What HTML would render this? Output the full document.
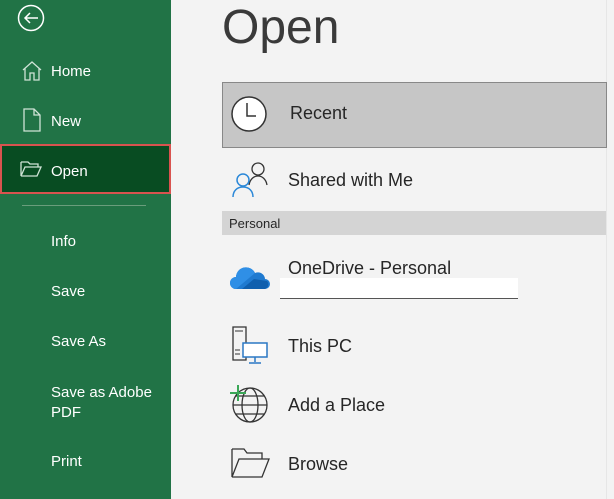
<!DOCTYPE html><html><head><style>
body{margin:0;width:614px;height:499px;overflow:hidden;background:#f3f3f3;font-family:"Liberation Sans",sans-serif;position:relative}
.side{position:absolute;left:0;top:0;width:171px;height:499px;background:#217346}
.si{position:absolute;left:51px;color:#fff;font-size:15px;margin-top:1px}
.ic{position:absolute}
.t{position:absolute;color:#262626;font-size:18px}
</style></head><body>
<div class="side">
<svg class="ic" style="left:16px;top:3px" width="30" height="30" viewBox="0 0 30 30"><circle cx="15" cy="15" r="12.5" fill="none" stroke="#fff" stroke-width="1.5"/><path d="M22 15H9M14 10l-5 5 5 5" fill="none" stroke="#fff" stroke-width="1.5"/></svg>
<svg class="ic" style="left:21px;top:60px" width="22" height="22" viewBox="0 0 22 22"><path d="M2 10L11 2l9 8M4 8v12h5v-7h4v7h5V8" fill="none" stroke="#cfe3d6" stroke-width="1.3"/></svg>
<div class="si" style="top:62px">Home</div>
<svg class="ic" style="left:22px;top:108px" width="20" height="24" viewBox="0 0 20 24"><path d="M2 1h10l6 6v16H2zM12 1v6h6" fill="none" stroke="#cfe3d6" stroke-width="1.3"/></svg>
<div class="si" style="top:112px">New</div>
<div style="position:absolute;left:0;top:144px;width:167px;height:46px;background:#084c22;border:2px solid #d9534f;box-sizing:content-box"></div>
<svg class="ic" style="left:20px;top:160px" width="22" height="18" viewBox="0 0 22 18"><path d="M1 2h7l2 2h8v3M1 2v14l4-9h16l-4 9H1" fill="none" stroke="#cfe3d6" stroke-width="1.3"/></svg>
<div class="si" style="top:162px">Open</div>
<div style="position:absolute;left:22px;top:205px;width:124px;height:1px;background:#6a9d7c"></div>
<div class="si" style="top:232px">Info</div>
<div class="si" style="top:282px">Save</div>
<div class="si" style="top:332px">Save As</div>
<div class="si" style="top:382px;line-height:20px">Save as Adobe<br>PDF</div>
<div class="si" style="top:452px">Print</div>
</div>
<div style="position:absolute;left:222px;top:0;font-size:48px;color:#3a3a3a;font-weight:300">Open</div>
<div style="position:absolute;left:606px;top:0;width:1px;height:499px;background:#e6e6e6"></div>
<div style="position:absolute;left:222px;top:82px;width:383px;height:64px;background:#c6c6c6;border:1px solid #888"></div>
<svg class="ic" style="left:229px;top:94px" width="40" height="40" viewBox="0 0 40 40"><circle cx="20" cy="20" r="17" fill="#fff" stroke="#333" stroke-width="1.5"/><path d="M18 9v13h9" fill="none" stroke="#333" stroke-width="1.5"/></svg>
<div class="t" style="left:290px;top:103px">Recent</div>
<svg class="ic" style="left:230px;top:160px" width="40" height="38" viewBox="0 0 40 38"><circle cx="28" cy="9" r="6" fill="none" stroke="#333" stroke-width="1.3"/><path d="M19 25c1-6 5-9 9-9s8 3 9 9" fill="none" stroke="#333" stroke-width="1.3"/><circle cx="13" cy="20" r="6" fill="none" stroke="#2b88d8" stroke-width="1.5"/><path d="M3 37c0-6 4-10 10-10s10 4 10 10" fill="none" stroke="#2b88d8" stroke-width="1.5"/></svg>
<div class="t" style="left:288px;top:170px">Shared with Me</div>
<div style="position:absolute;left:222px;top:211px;width:384px;height:24px;background:#d4d4d4"></div>
<div style="position:absolute;left:229px;top:216px;font-size:13px;color:#262626">Personal</div>
<svg class="ic" style="left:230px;top:262px" width="40" height="28" viewBox="0 0 40 28"><path d="M6 27a6 6 0 010-12 10 10 0 0119-4 7 7 0 0110 6 5 5 0 010 10z" fill="#1f7ad0"/><path d="M12 27l12-10 13 2a5 5 0 01-2 8z" fill="#0f5fae"/><path d="M6 27a6 6 0 010-12 10 10 0 0119-4z" fill="#2f8fe6"/></svg>
<div class="t" style="left:288px;top:258px">OneDrive - Personal</div>
<div style="position:absolute;left:280px;top:278px;width:238px;height:20px;background:#fff;border-bottom:1px solid #555"></div>
<svg class="ic" style="left:230px;top:326px" width="40" height="40" viewBox="0 0 40 40"><path d="M3 1h13v33H3z" fill="none" stroke="#333" stroke-width="1.3"/><path d="M5 5h8M5 24h5M5 28h5" stroke="#333"/><rect x="13" y="17" width="24" height="14" fill="#fff" stroke="#2b78c4" stroke-width="1.5"/><path d="M25 31v5M19 37h12" stroke="#2b78c4" stroke-width="1.5"/></svg>
<div class="t" style="left:288px;top:336px">This PC</div>
<svg class="ic" style="left:228px;top:384px" width="44" height="40" viewBox="0 0 44 40"><circle cx="22" cy="21" r="17" fill="none" stroke="#333" stroke-width="1.3"/><ellipse cx="22" cy="21" rx="8" ry="17" fill="none" stroke="#333" stroke-width="1.3"/><path d="M5 21h34M8 12h28M8 30h28" stroke="#333" stroke-width="1.3"/><path d="M10 1v16M2 9h16" stroke="#3aa757" stroke-width="2"/></svg>
<div class="t" style="left:288px;top:395px">Add a Place</div>
<svg class="ic" style="left:230px;top:447px" width="40" height="32" viewBox="0 0 40 32"><path d="M2 2h12l3 4h15v6M2 2v28l7-18h30l-7 18H2" fill="none" stroke="#333" stroke-width="1.3"/></svg>
<div class="t" style="left:288px;top:454px">Browse</div>
</body></html>
